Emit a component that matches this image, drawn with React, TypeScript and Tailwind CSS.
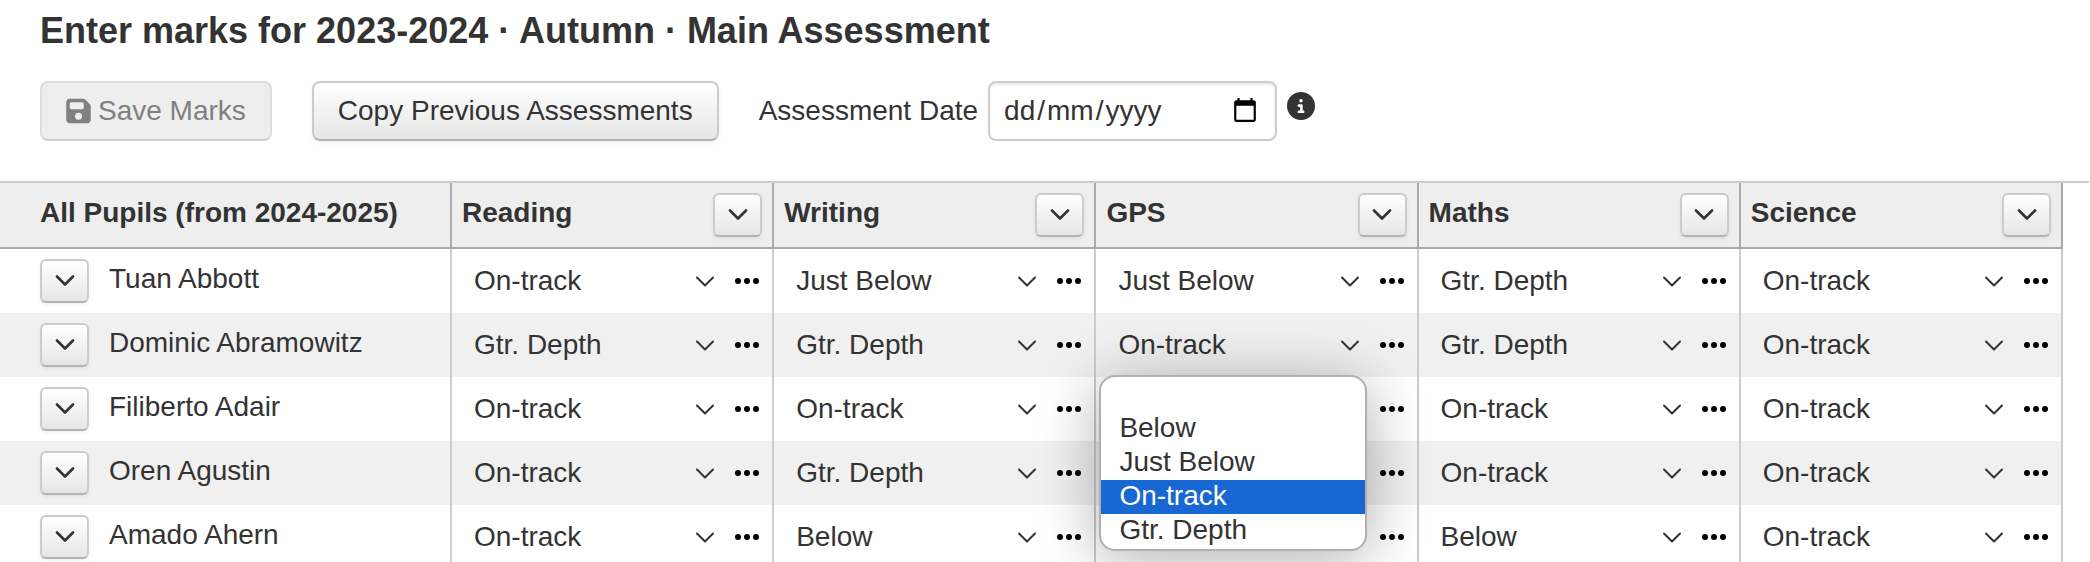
import { useState } from "react";
import { FaCircleInfo, FaFloppyDisk } from "react-icons/fa6";

const SUBJECTS = ["Reading", "Writing", "GPS", "Maths", "Science"];
const GRADES = ["", "Below", "Just Below", "On-track", "Gtr. Depth"];

const PUPILS = [
  { name: "Tuan Abbott", marks: ["On-track", "Just Below", "Just Below", "Gtr. Depth", "On-track"] },
  { name: "Dominic Abramowitz", marks: ["Gtr. Depth", "Gtr. Depth", "On-track", "Gtr. Depth", "On-track"] },
  { name: "Filiberto Adair", marks: ["On-track", "On-track", "On-track", "On-track", "On-track"] },
  { name: "Oren Agustin", marks: ["On-track", "Gtr. Depth", "Just Below", "On-track", "On-track"] },
  { name: "Amado Ahern", marks: ["On-track", "Below", "On-track", "Below", "On-track"] },
];

const OPEN_ROW = 1;
const OPEN_COLUMN = 2;

function Chevron({ className }: { className: string }) {
  return (
    <svg viewBox="0 0 20 12" fill="none" stroke="currentColor" strokeLinecap="round" strokeLinejoin="round" className={className} aria-hidden="true">
      <path d="M2 1.5 10 9.5 18 1.5" />
    </svg>
  );
}

function MenuButton({ label }: { label: string }) {
  return (
    <button
      type="button"
      aria-label={label}
      className="flex h-11 w-[49px] shrink-0 items-center justify-center rounded-md border-2 border-[#cccccc] border-b-[#b3b3b3] bg-linear-to-b from-white to-[#e6e6e6] shadow-[0_2px_4px_rgba(0,0,0,0.06)]"
    >
      <Chevron className="h-3 w-5 stroke-[2.6]" />
    </button>
  );
}

function GradeMenu({ selected, onPick }: { selected: string; onPick: (grade: string) => void }) {
  return (
    <ul
      role="listbox"
      aria-label="Grades"
      className="absolute top-[62px] right-[50px] left-[3px] z-10 rounded-2xl border-2 border-[#b0b0b0] bg-white py-px shadow-[0_8px_60px_rgba(0,0,0,0.32)]"
    >
      {GRADES.map((grade) => (
        <li
          key={grade}
          role="option"
          aria-selected={grade === selected}
          onClick={() => onPick(grade)}
          className={grade === selected ? "h-[34px] bg-[#1967d2] px-[18px] leading-[31px] text-white" : "h-[34px] px-[18px] leading-[31px]"}
        >
          {grade}
        </li>
      ))}
    </ul>
  );
}

function MarkCell({ label, initial, open }: { label: string; initial: string; open: boolean }) {
  const [grade, setGrade] = useState(initial);
  return (
    <div className="relative flex h-16 items-center pr-[5px] pl-[2px]">
      <div className="relative flex-1">
        <select
          aria-label={label}
          value={grade}
          onChange={(e) => setGrade(e.target.value)}
          className="h-[60px] w-full appearance-none bg-transparent pr-12 pl-5"
        >
          {GRADES.map((g) => (
            <option key={g} value={g}>
              {g}
            </option>
          ))}
        </select>
        <Chevron className="pointer-events-none absolute top-[25px] right-3 h-3 w-5 stroke-2" />
      </div>
      <button type="button" aria-label={`${label} options`} className="flex h-10 w-10 items-center justify-center text-black">
        <svg viewBox="0 0 24 6" className="h-[6px] w-6" fill="currentColor" aria-hidden="true">
          <circle cx="3" cy="3" r="3" />
          <circle cx="12" cy="3" r="3" />
          <circle cx="21" cy="3" r="3" />
        </svg>
      </button>
      {open && <GradeMenu selected={grade} onPick={setGrade} />}
    </div>
  );
}

function DateField() {
  const [date, setDate] = useState("");
  return (
    <div className="flex items-center gap-[10px]">
      <label htmlFor="assessment-date">Assessment Date</label>
      <div className="relative">
        <input
          id="assessment-date"
          type="date"
          value={date}
          onChange={(e) => setDate(e.target.value)}
          className={
            "h-[60px] w-[289px] rounded-lg border-2 border-[#cccccc] bg-white pr-[14px] pl-[14px] shadow-[inset_0_2px_2px_rgba(0,0,0,0.075)] " +
            (date ? "text-[#333333]" : "text-transparent")
          }
        />
        {!date && (
          <span className="pointer-events-none absolute inset-y-0 left-4 flex items-center gap-0.5" aria-hidden="true">
            <span>dd</span>
            <span>/</span>
            <span>mm</span>
            <span>/</span>
            <span>yyyy</span>
          </span>
        )}
      </div>
      <FaCircleInfo className="mb-[10px] size-7" aria-label="Information" />
    </div>
  );
}

export default function App() {
  return (
    <main className="h-screen overflow-hidden bg-white font-['Liberation_Sans',Arial,sans-serif] text-[28px] leading-10 text-[#333333]">
      <h1 className="px-10 pt-[11px] text-4xl leading-10 font-bold">Enter marks for 2023-2024 · Autumn · Main Assessment</h1>
      <div className="flex items-center gap-10 px-10 pt-[30px] pb-10">
        <button
          type="button"
          disabled
          className="flex h-[60px] items-center gap-[7px] rounded-lg border-2 border-[#dddddd] border-b-[#cfcfcf] bg-[#eeeeee] px-6 text-[#808080]"
        >
          <FaFloppyDisk className="h-7 w-[25px]" />
          Save Marks
        </button>
        <button
          type="button"
          className="h-[60px] rounded-lg border-2 border-[#cccccc] border-b-[#b3b3b3] bg-linear-to-b from-white to-[#e6e6e6] px-6 shadow-[0_2px_4px_rgba(0,0,0,0.06)]"
        >
          Copy Previous Assessments
        </button>
        <DateField />
      </div>
      <div className="mr-px border-t-2 border-[#cccccc] pr-[26px]">
        <table className="w-full table-fixed border-separate border-spacing-0">
          <thead className="bg-[#eeeeee]">
            <tr>
              <th scope="col" className="w-[452px] border-r-2 border-b-2 border-[#aaaaaa] px-10 pt-[10px] text-left align-top font-bold">
                All Pupils (from 2024-2025)
              </th>
              {SUBJECTS.map((subject) => (
                <th key={subject} scope="col" className="border-r-2 border-b-2 border-[#aaaaaa] p-[10px] font-bold">
                  <div className="flex items-start justify-between">
                    <span>{subject}</span>
                    <MenuButton label={`${subject} menu`} />
                  </div>
                </th>
              ))}
            </tr>
          </thead>
          <tbody>
            {PUPILS.map((pupil, row) => (
              <tr key={pupil.name} className="even:bg-[#f0f0f0]">
                <th scope="row" className="border-r-2 border-[#cccccc] p-0 font-normal">
                  <div className="flex items-start gap-5 py-[10px] pl-10">
                    <MenuButton label={`${pupil.name} menu`} />
                    <span>{pupil.name}</span>
                  </div>
                </th>
                {pupil.marks.map((mark, column) => (
                  <td key={SUBJECTS[column]} className="border-r-2 border-[#cccccc] p-0">
                    <MarkCell
                      label={`${pupil.name} ${SUBJECTS[column]}`}
                      initial={mark}
                      open={row === OPEN_ROW && column === OPEN_COLUMN}
                    />
                  </td>
                ))}
              </tr>
            ))}
          </tbody>
        </table>
      </div>
    </main>
  );
}
